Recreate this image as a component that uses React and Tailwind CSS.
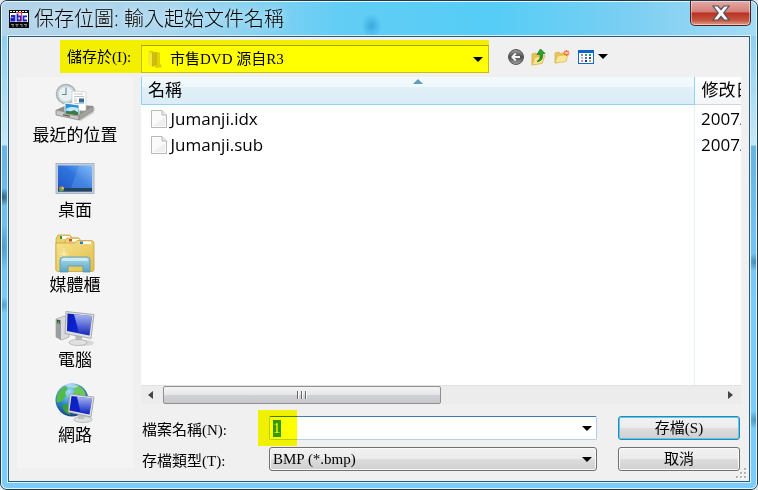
import React, { useEffect, useRef, useState } from 'react';

const AppIcon = () => (
    <svg viewBox="0 0 20 18" className="w-5 h-[18px] shrink-0" aria-hidden="true">
        <rect width="20" height="18" fill="#0a0a0a" />
        <rect x="1" y="3" width="18" height="9" fill="#fff" />
        {[1, 4, 7, 10, 13, 16].map((x) => (
            <rect key={x} x={x} y="1" width="2" height="1" fill="#fff" />
        ))}
        <g fill="none" strokeWidth="1.8">
            <path d="M2 6h3.500v4.500H2.300v-2h3.200" stroke="#1c22c8" />
            <path d="M8.500 3.500v7h3.200V6.300H8.500" stroke="#1c22c8" />
            <path d="M18 6.300h-3.500v4.200H18" stroke="#1c22c8" />
            <path d="M7 2.500h5.500v8.500" stroke="#f0393f" strokeWidth="1.200" />
        </g>
        <path d="M2 14.500h3M6.500 14.500h3M11 14.500h2.500M15 14.500h3M3 16h2M7 16h2M12 16h2M16 16h2" stroke="#8a8a8a" strokeWidth="1" />
    </svg>
);

const FolderIcon = () => (
    <svg viewBox="0 0 18 20" className="w-[18px] h-5" aria-hidden="true">
        <path d="M10 14l6 2-1 2.500-6 .5z" fill="#b9b600" opacity=".6" />
        <path d="M2 2h5l1 1h4v13H2z" fill="#d9cf00" />
        <path d="M2 2l4 2v14l-4-2z" fill="#f3ea2c" />
        <path d="M6 4l7-1v12l-7 3z" fill="#cfbb10" />
        <path d="M11 3l3 1v12l-3 2z" fill="#e2d300" />
    </svg>
);

const FileIcon = () => (
    <svg viewBox="0 0 16 18" className="w-4 h-[18px] shrink-0" aria-hidden="true">
        <path d="M.500.500h10.500l4.500 4.500v12.500H.500z" fill="#fafafa" stroke="#b9b9b9" />
        <path d="M11 .5V5h4.500" fill="#e6e6e6" stroke="#b9b9b9" />
        <path d="M2 16L14 7v9z" fill="#efefef" />
    </svg>
);

const BackIcon = () => (
    <svg viewBox="0 0 18 18" className="w-[18px] h-[18px]" aria-hidden="true">
        <defs>
            <linearGradient id="back" x1="0" y1="0" x2="0" y2="1">
                <stop offset="0" stopColor="#a2a2a2" />
                <stop offset=".5" stopColor="#4c4c4c" />
                <stop offset="1" stopColor="#a4a4a4" />
            </linearGradient>
        </defs>
        <circle cx="9" cy="9" r="7.500" fill="url(#back)" stroke="#5a5a5a" />
        <path d="M13 9H5.500M8.800 5.500L5.300 9l3.500 3.500" fill="none" stroke="#f4f4f4" strokeWidth="1.800" />
    </svg>
);

const UpIcon = () => (
    <svg viewBox="0 0 18 18" className="w-[18px] h-[18px]" aria-hidden="true">
        <path d="M2 6l4-1 1 1.500 5-1v9L2 17z" fill="#e9c451" stroke="#d2a63a" strokeWidth=".7" />
        <path d="M2 17l3-8 10-1.500-3 8z" fill="#fbe38e" stroke="#d8b04a" strokeWidth=".7" />
        <path d="M7 13.500c3-1.500 3.500-4.500 3-7.500l-3 .5L10.500 1 15 5.500l-2.500.2c.5 4.500-1 7.800-5.500 7.800z" fill="#2fa52d" stroke="#127717" strokeWidth=".8" />
    </svg>
);

const NewFolderIcon = () => (
    <svg viewBox="0 0 18 18" className="w-[18px] h-[18px]" aria-hidden="true">
        <path d="M2 5l4-1 1 1.500 6-1v8L2 15z" fill="#eac65a" stroke="#d6aa42" strokeWidth=".7" />
        <path d="M2 15L4.500 8 15 6.500l-2 7z" fill="#fce69a" stroke="#dcb553" strokeWidth=".7" />
        <path d="M13.500 2v6M10.500 5h6M11.500 3l4 4M15.500 3l-4 4" stroke="#f0602c" strokeWidth="1.200" />
        <circle cx="13.500" cy="5" r="1.300" fill="#ffe9a0" />
    </svg>
);

const dotColors = ['#8a8fb4', '#4a9a55', '#22a045', '#c0b8c8', '#4a6fd0', '#2b3f9c', '#e08a86', '#1634a8', '#c9a52c'];

const ViewIcon = () => (
    <svg viewBox="0 0 16 16" className="w-4 h-4" aria-hidden="true">
        <rect x=".5" y="1.500" width="15" height="13" fill="#fff" stroke="#1468cf" strokeWidth="1" />
        <rect y="1" width="16" height="3" fill="#0d62cc" />
        {dotColors.map((c, i) => (
            <rect key={i} x={3 + (i % 3) * 4} y={5 + Math.floor(i / 3) * 3} width="2" height="2" fill={c} />
        ))}
    </svg>
);

const Triangle = ({ className }) => (
    <svg viewBox="0 0 10 5" className={`w-[10px] h-[5px] ${className || ''}`} aria-hidden="true">
        <path d="M0 0h10L5 5z" fill="#000" />
    </svg>
);

const RecentIcon = () => (
    <svg viewBox="0 0 40 40" className="w-10 h-10" aria-hidden="true">
        <circle cx="11" cy="11" r="9.500" fill="#d3dde0" stroke="#a9b3b6" strokeWidth="1.600" />
        <circle cx="11" cy="11" r="7.500" fill="#e8f1f4" stroke="#c6d0d4" strokeWidth=".7" />
        <path d="M11 4.500v7.500M11 11.500H7" stroke="#6a8491" strokeWidth="1.100" fill="none" />
        <path d="M24 37l14-9v-5l2 2-1 5-13 8z" fill="#bcbcbc" opacity=".6" />
        <path d="M1 27l13-6 24 2-14 9z" fill="#8f8c88" />
        <path d="M17 8l14 1v19l-14-1z" fill="#fff" stroke="#c2c5c8" strokeWidth=".6" />
        <path d="M19 11h9M19 13.500h10M19 16h3M19 18h3M19 20.500h10" stroke="#bcbfc2" strokeWidth=".9" />
        <path d="M24 15.500h5v4h-5z" fill="#2f6f9e" />
        <path d="M10 20l14 2v11l-14-2z" fill="#2d8fd6" stroke="#f7f7f7" />
        <path d="M11 26c4-3 8-2 12-1v4l-12-1.500z" fill="#c3e8f8" />
        <path d="M11 28l4 1 4-2 4 2.500v3l-12-2z" fill="#3d7a3c" />
        <path d="M1 27l9 1.800V31l14 2v4L1 32z" fill="#c9c6c2" stroke="#8c8986" strokeWidth=".8" />
        <path d="M24 32l14-9v5l-14 9z" fill="#a5a29e" stroke="#85827f" strokeWidth=".7" />
        <path d="M8 31l7 1.500V34l-7-1.500z" fill="#6e6c6a" />
    </svg>
);

const DesktopIcon = () => (
    <svg viewBox="0 0 40 40" className="w-10 h-10" aria-hidden="true">
        <defs>
            <linearGradient id="desk" x1="0" y1="1" x2="1" y2="0">
                <stop offset="0" stopColor="#2156c4" />
                <stop offset=".55" stopColor="#2f74dc" />
                <stop offset="1" stopColor="#7db8f6" />
            </linearGradient>
        </defs>
        <rect x="1" y="5.500" width="38" height="30" fill="#c3cddb" stroke="#aab5c4" />
        <rect x="3" y="7.500" width="34" height="26" fill="url(#desk)" />
        <path d="M24 7.500h13V30H16z" fill="#9ccbff" opacity=".2" />
        <rect x="3" y="30" width="34" height="3.500" fill="#26445f" />
        <circle cx="6.500" cy="31" r="2.500" fill="#61a85c" />
        <path d="M6.500 28.500a2.500 2.500 0 0 1 2.500 2.500H6.500z" fill="#f2c84a" />
        <path d="M6.500 31v-2.500A2.500 2.500 0 0 0 4 31z" fill="#e0643c" />
    </svg>
);

const LibraryIcon = () => (
    <svg viewBox="0 0 40 40" className="w-10 h-10" aria-hidden="true">
        <defs>
            <linearGradient id="lib" x1="0" y1="0" x2="1" y2="1">
                <stop offset="0" stopColor="#f7e28c" />
                <stop offset="1" stopColor="#e2bf4a" />
            </linearGradient>
            <linearGradient id="stand" x1="0" y1="0" x2="0" y2="1">
                <stop offset="0" stopColor="#a8dcf0" />
                <stop offset="1" stopColor="#4fa3d2" />
            </linearGradient>
        </defs>
        <path d="M1 37V6l2-4h12l2 3h6v32z" fill="#edcf6b" stroke="#caa43b" strokeWidth=".8" />
        <rect x="5" y="3" width="10" height="3" fill="#fff" />
        <rect x="5" y="3" width="2" height="3" fill="#2c9a48" />
        <path d="M10 37V8l2-3h12l2 3h5v29z" fill="#f0d67a" stroke="#caa43b" strokeWidth=".8" />
        <rect x="14" y="6" width="10" height="2.500" fill="#fff" />
        <rect x="14" y="6" width="3" height="2.500" fill="#d9492f" />
        <path d="M1 10h19l2-2.500h14q3 0 3 3v26q0 2-2 2H3q-2 0-2-2z" fill="url(#lib)" stroke="#c9a53e" strokeWidth=".8" />
        <rect x="25" y="8.500" width="11" height="2.500" fill="#fff" />
        <rect x="25" y="8.500" width="3" height="2.500" fill="#2a7bd0" />
        <path d="M9 15v13M4 21h10M6 18l6 6M12 18l-6 6" stroke="#fffbe0" strokeWidth=".8" opacity=".7" />
        <path d="M5 39V27q0-3 3-3h24q3 0 3 3v12h-7v-6H13v6z" fill="url(#stand)" stroke="#4c94b8" strokeWidth=".8" opacity=".93" />
        <path d="M7 28q0-3 2-3h22q2 0 2 3z" fill="#d6f1fa" opacity=".8" />
    </svg>
);

const ComputerIcon = () => (
    <svg viewBox="0 0 40 40" className="w-10 h-10" aria-hidden="true">
        <defs>
            <linearGradient id="screen" x1="0" y1="0" x2="1" y2=".4">
                <stop offset="0" stopColor="#0a1aa8" />
                <stop offset=".4" stopColor="#0c22d0" />
                <stop offset="1" stopColor="#1a2cb4" />
            </linearGradient>
            <linearGradient id="gloss" x1="0" y1="0" x2="0" y2="1">
                <stop offset="0" stopColor="#dfe8ff" stopOpacity=".75" />
                <stop offset="1" stopColor="#dfe8ff" stopOpacity="0" />
            </linearGradient>
        </defs>
        <ellipse cx="30" cy="35" rx="9" ry="3" fill="#bbb" opacity=".5" />
        <path d="M1 11l8-3 5 2v19l-7 3-6-3z" fill="#d9dadb" stroke="#9fa2a4" strokeWidth=".7" />
        <path d="M1 11l5 1v20l-5-3z" fill="#9a9ea0" />
        <path d="M2 12l3 .5v3l-3-.5z" fill="#333" />
        <circle cx="3.500" cy="14" r="1" fill="#35d33a" />
        <path d="M20 27l7 2v6h-6z" fill="#b8bbbe" />
        <ellipse cx="23" cy="34.500" rx="9" ry="3" fill="#dfe1e2" stroke="#a4a7a9" strokeWidth=".7" />
        <path d="M11 3.500l28 3-3 24-26-5z" fill="#dcdedf" stroke="#9b9ea0" strokeWidth=".8" />
        <path d="M12.500 5.500L37 8l-2.500 19.500-22.500-4.500z" fill="url(#screen)" />
        <path d="M19 6.200L37 8l-2.500 19L24 25z" fill="url(#gloss)" />
    </svg>
);

const NetworkIcon = () => (
    <svg viewBox="0 0 40 40" className="w-10 h-10" aria-hidden="true">
        <defs>
            <radialGradient id="globe" cx=".4" cy=".25" r=".8">
                <stop offset="0" stopColor="#9fe0f7" />
                <stop offset=".5" stopColor="#2f86c6" />
                <stop offset="1" stopColor="#123a84" />
            </radialGradient>
        </defs>
        <circle cx="17" cy="17" r="16.500" fill="url(#globe)" />
        <path d="M2 12q3-7 9-9l2 3-3 3 1 4-4 5-5 2q-1-4 0-8z" fill="#54b94a" />
        <path d="M19 2q9 1 12 9l-3 3-4-3-4 3-3-2 3-4z" fill="#6cc754" />
        <path d="M7 23l6-2 3 4-1 7q-6-2-8-9z" fill="#3c9e35" />
        <path d="M9 2q8-3 15 1l-4 2-7-1z" fill="#d5f0f8" opacity=".6" />
        <ellipse cx="28" cy="36.500" rx="9" ry="3" fill="#dfe1e2" stroke="#a4a7a9" strokeWidth=".7" />
        <path d="M23 30l6 1v5h-6z" fill="#bcbfc2" />
        <path d="M15 11l24 3-3 20-23-5z" fill="#dcdedf" stroke="#9b9ea0" strokeWidth=".8" />
        <path d="M16.500 13l20.500 2.500-2.500 16-20-4z" fill="#0c22c4" />
        <path d="M22 13.700l15 1.800-2.500 15.500-9-2z" fill="url(#gloss)" />
    </svg>
);

const places = [
    { name: '最近的位置', Icon: RecentIcon },
    { name: '桌面', Icon: DesktopIcon },
    { name: '媒體櫃', Icon: LibraryIcon },
    { name: '電腦', Icon: ComputerIcon },
    { name: '網路', Icon: NetworkIcon },
];

const files = [
    { name: 'Jumanji.idx', date: '2007/' },
    { name: 'Jumanji.sub', date: '2007/' },
];

const TitleBar = () => (
    <header className="relative h-[33px] flex items-center gap-[5px] pl-[2px] pr-14">
        <AppIcon />
        <h1 className="text-[20px] leading-[32px] font-light text-black whitespace-nowrap [text-shadow:0_0_8px_#ffffff]">
            保存位圖: 輸入起始文件名稱
        </h1>
        <button
            type="button"
            aria-label="關閉"
            className="absolute right-0 -top-px w-[61px] h-[25px] flex items-center justify-center rounded-b-[5px] border border-t-0 border-[#4b2226] bg-[linear-gradient(#e5aaa6_0%,#d48078_45%,#b93224_50%,#c4543f_80%,#e0a08a_100%)] shadow-[inset_0_0_0_1px_#ffffff70]"
        >
            <svg viewBox="0 0 18 16" className="w-[18px] h-4" aria-hidden="true">
                <path
                    d="M1 1h5l3 3.500L12 1h5l-5.300 7 5.300 7h-5l-3-3.500L6 15H1l5.300-7z"
                    fill="#f6f6f6"
                    stroke="#51515f"
                    strokeWidth="1.200"
                />
            </svg>
        </button>
    </header>
);

const LookIn = () => (
    <div className="flex items-center h-[33px] pl-[51px]">
        <div className="flex-1 max-w-[429px] h-full flex items-center bg-[#f2f000]">
            <label htmlFor="look-in" className="w-[81px] shrink-0 pl-[7px] text-[15px] leading-6 whitespace-nowrap">
                儲存於(I):
            </label>
            <div className="relative flex-1 mt-[5px] self-start">
                <select
                    id="look-in"
                    className="appearance-none block w-full h-[28px] pl-[28px] pr-6 text-[15px] leading-6 bg-[#ffff00] border border-[#c2c000] border-t-[#a4a200]"
                >
                    <option>市售DVD 源自R3</option>
                </select>
                <span className="absolute left-[5px] top-1 pointer-events-none">
                    <FolderIcon />
                </span>
                <Triangle className="absolute right-[6px] top-3 pointer-events-none" />
            </div>
        </div>
        <div className="flex items-center gap-[5px] ml-[18px]">
            <button type="button" aria-label="上一步"><BackIcon /></button>
            <button type="button" aria-label="上移一層"><UpIcon /></button>
            <button type="button" aria-label="建立新資料夾"><NewFolderIcon /></button>
            <button type="button" aria-label="檢視" className="flex items-center gap-1 pl-[2px]">
                <ViewIcon />
                <Triangle />
            </button>
        </div>
    </div>
);

const Places = () => (
    <nav className="w-[116px] shrink-0 bg-[#f4f4f4] mb-[3px] pt-[6px]">
        {places.map(({ name, Icon }) => (
            <button key={name} type="button" className="w-full h-[75px] flex flex-col items-center">
                <Icon />
                <span className="text-[17px] leading-6 whitespace-nowrap">{name}</span>
            </button>
        ))}
    </nav>
);

const FileList = () => (
    <div className="flex-1 flex flex-col bg-white overflow-hidden">
        <div className="relative flex-1">
            <span className="absolute right-[46px] top-7 bottom-0 w-px bg-[#e6f0fa]" />
            <table className="relative w-full table-fixed border-collapse text-[17px] leading-6 text-black">
                <thead>
                    <tr className="h-[27px]">
                        <th className="relative p-0 pl-[6px] text-left font-normal border-x border-b border-[#8fd3f5] bg-[linear-gradient(#f3fafd_0%,#eff8fc_36%,#e0f0f9_38%,#daecf6_100%)]">
                            名稱
                            <svg viewBox="0 0 10 5" className="absolute left-1/2 top-[2px] -ml-[5px] w-[10px] h-[5px]" aria-hidden="true">
                                <path d="M0 5l5-5 5 5z" fill="#5f9cbd" />
                            </svg>
                        </th>
                        <th className="w-[47px] p-0 pl-[7px] text-left font-normal whitespace-nowrap overflow-hidden border-b border-[#d5d5d5] bg-[linear-gradient(#ffffff,#f4f5f6)]">
                            修改日期
                        </th>
                    </tr>
                </thead>
                <tbody>
                    {files.map((file) => (
                        <tr key={file.name}>
                            <td className="p-0 pt-[2px] pl-[9px]">
                                <span className="flex items-center gap-1">
                                    <FileIcon />
                                    {file.name}
                                </span>
                            </td>
                            <td className="p-0 pt-[2px] pl-[7px] whitespace-nowrap overflow-hidden">{file.date}</td>
                        </tr>
                    ))}
                </tbody>
            </table>
        </div>
        <div className="h-[19px] flex items-stretch bg-[#ececec] border-t border-[#e2e2e2]">
            <button type="button" aria-label="向左捲動" className="w-[22px] flex items-center justify-center">
                <svg viewBox="0 0 5 8" className="w-[5px] h-2 -ml-1" aria-hidden="true">
                    <path d="M5 0v8L0 4z" fill="#444" />
                </svg>
            </button>
            <div className="flex-1">
                <div className="w-1/2 h-full flex items-center justify-center gap-[2px] rounded-[2px] border border-[#8f8f8f] bg-[linear-gradient(#f4f4f4_0%,#e6e6e8_48%,#d0d1d4_52%,#c8c9cc_100%)]">
                    <i className="w-[2px] h-2 bg-[#666] border-r border-white" />
                    <i className="w-[2px] h-2 bg-[#666] border-r border-white" />
                    <i className="w-[2px] h-2 bg-[#666] border-r border-white" />
                </div>
            </div>
            <button type="button" aria-label="向右捲動" className="w-[22px] flex items-center justify-center">
                <svg viewBox="0 0 5 8" className="w-[5px] h-2" aria-hidden="true">
                    <path d="M0 0v8l5-4z" fill="#444" />
                </svg>
            </button>
        </div>
    </div>
);

const SaveForm = () => {
    const [fileName, setFileName] = useState('1');
    const nameRef = useRef(null);

    useEffect(() => {
        nameRef.current.focus();
        nameRef.current.select();
    }, []);

    return (
        <form
            onSubmit={(e) => e.preventDefault()}
            className="grid grid-cols-[128px_1fr_143px] gap-y-[7px] mt-3 pr-px text-[15px] leading-5"
        >
            <label htmlFor="file-name" className="self-center pt-[3px] pl-px whitespace-nowrap">檔案名稱(N):</label>
            <div className="relative">
                <input
                    id="file-name"
                    ref={nameRef}
                    type="text"
                    value={fileName}
                    onChange={(e) => setFileName(e.target.value)}
                    className="block w-full h-6 pl-[3px] pr-6 bg-white border border-[#b5cfe7] border-t-[#3d7bad] rounded-[2px] outline-none selection:bg-[#3399ff] selection:text-white"
                />
                <Triangle className="absolute right-[5px] top-[10px] pointer-events-none" />
                {/* highlighter mark over the start of the name */}
                <span className="absolute -left-[11px] -top-[6px] w-[39px] h-9 bg-[#ffff00] mix-blend-multiply pointer-events-none" />
            </div>
            <button
                type="submit"
                className="ml-[21px] h-6 rounded-[3px] border border-[#3c7fb1] shadow-[inset_0_0_0_1px_#48d0f5] bg-[linear-gradient(#f2f2f2_0%,#ebebeb_48%,#dddddd_52%,#cfcfcf_100%)]"
            >
                存檔(S)
            </button>

            <label htmlFor="file-type" className="self-center pt-[3px] pl-px whitespace-nowrap">存檔類型(T):</label>
            <div className="relative">
                <select
                    id="file-type"
                    className="appearance-none block w-full h-6 pl-[3px] pr-6 rounded-[3px] border border-[#707070] shadow-[inset_0_0_0_1px_#fafafa] bg-[linear-gradient(#f2f2f2_0%,#ebebeb_48%,#dddddd_52%,#cfcfcf_100%)]"
                >
                    <option>BMP (*.bmp)</option>
                </select>
                <Triangle className="absolute right-[5px] top-[10px] pointer-events-none" />
            </div>
            <button
                type="button"
                className="ml-[21px] h-6 rounded-[3px] border border-[#707070] shadow-[inset_0_0_0_1px_#fafafa] bg-[linear-gradient(#f2f2f2_0%,#ebebeb_48%,#dddddd_52%,#cfcfcf_100%)]"
            >
                取消
            </button>
        </form>
    );
};

const Grip = () => (
    <svg viewBox="0 0 12 12" className="absolute right-[2px] bottom-[2px] w-3 h-3" aria-hidden="true">
        {[[9, 1], [5, 5], [9, 5], [1, 9], [5, 9], [9, 9]].map(([x, y]) => (
            <g key={`${x}-${y}`}>
                <rect x={x + 1} y={y + 1} width="2" height="2" fill="#fff" />
                <rect x={x} y={y} width="2" height="2" fill="#b4b4b4" />
            </g>
        ))}
    </svg>
);

export default function App() {
    return (
        <div className="min-h-screen bg-[#dfe9ef] flex font-['Open_Sans','Noto_Sans_CJK_TC',sans-serif]">
            <div className="flex-1 flex flex-col rounded-[7px] border border-[#1f3a4c] overflow-hidden">
                {/* glass frame: blurred spots, title strip, then the side colours */}
                <div className="flex-1 flex flex-col rounded-[6px] border border-[#e4f6ff] px-[5px] pb-[5px] bg-[radial-gradient(10px_12px_at_49%_24px,#2a98d8b0,transparent),radial-gradient(12px_9px_at_0_195px,#1d4a62d0,transparent),radial-gradient(12px_24px_at_0_245px,#2d6f9780,transparent),radial-gradient(12px_8px_at_0_303px,#2d6f9780,transparent),radial-gradient(12px_9px_at_100%_260px,#2a668aa0,transparent),radial-gradient(12px_9px_at_100%_418px,#2a668a90,transparent),linear-gradient(90deg,#b4d3e8_0%,#a8d6ee_22%,#62cdf5_45%,#55cdf6_65%,#7fcff2_85%,#a5dcf5_100%),linear-gradient(#8ed0f0_36px,#c5e8f7_143px,#68b4e2_144px,#7accfb_300px)] bg-[size:100%_100%,100%_100%,100%_100%,100%_100%,100%_100%,100%_100%,100%_34px,100%_100%] bg-no-repeat">
                    <TitleBar />
                    <div className="flex-1 flex flex-col border border-[#d6f1fd]">
                        <main className="relative flex-1 flex flex-col border border-[#2f5a75] bg-[#f0f0f0] pt-[3px] pb-[10px] text-black font-['Liberation_Serif','Noto_Sans_CJK_TC',serif]">
                            <LookIn />
                            <div className="flex-1 flex mt-1 px-2 gap-2">
                                <div className="flex font-['Open_Sans','Noto_Sans_CJK_TC',sans-serif]">
                                    <Places />
                                </div>
                                <div className="flex-1 flex flex-col min-w-0">
                                    <div className="flex-1 flex font-['Open_Sans','Noto_Sans_CJK_TC',sans-serif]">
                                        <FileList />
                                    </div>
                                    <SaveForm />
                                </div>
                            </div>
                            <Grip />
                        </main>
                    </div>
                </div>
            </div>
        </div>
    );
}
